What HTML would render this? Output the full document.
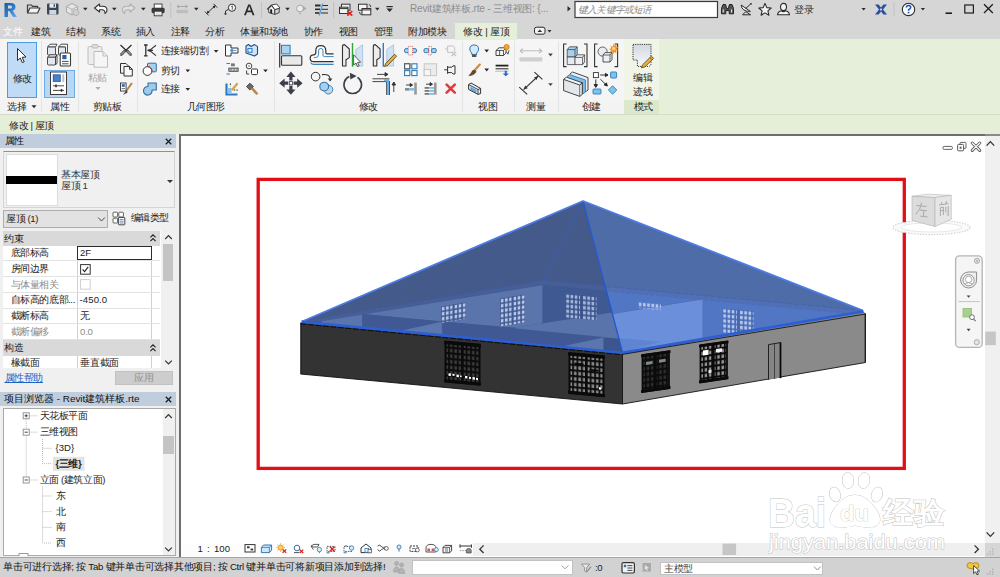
<!DOCTYPE html>
<html lang="zh">
<head>
<meta charset="utf-8">
<title>Revit</title>
<style>
html,body{margin:0;padding:0;background:#d6d6d6;}
body{width:1000px;height:577px;overflow:hidden;font-family:"Liberation Sans",sans-serif;font-size:9.6px;color:#1c1c1c;}
#app{position:relative;width:1000px;height:577px;overflow:hidden;background:#d6d6d6;}
.abs{position:absolute;}
.t{position:absolute;white-space:nowrap;font-size:9.6px;line-height:12px;color:#1c1c1c;letter-spacing:-0.4px;}
.l0{letter-spacing:0 !important;}
.g{color:#8c8c8c;}
svg{position:absolute;overflow:visible;}
/* chrome */
#title{left:0;top:0;width:1000px;height:22px;background:#d6d6d6;}
#tabs{left:0;top:22px;width:1000px;height:17px;background:#d6d6d6;}
#ribbon{left:0;top:39px;width:1000px;height:75px;background:#e6efd9;}
#panels{left:0;top:39px;width:624px;height:75px;background:#f5f5f5;}
#plabels{left:0;top:100px;width:624px;height:14px;background:#f3f3f3;}
#options{left:0;top:113.5px;width:1000px;height:20.5px;background:#e5efd7;border-top:1px solid #d3dcc6;box-sizing:border-box;}
.sep{position:absolute;top:41px;width:1px;height:71px;background:#e4e4e4;}
.dd{position:absolute;width:0;height:0;border-left:2.5px solid transparent;border-right:2.5px solid transparent;border-top:3px solid #333;}
/* left palettes */
#left{left:0;top:134px;width:179px;height:423px;background:#f0f0f0;}
.phead{position:absolute;left:0;width:176px;height:14px;background:#bfcddc;}
/* viewport */
#view{left:179px;top:134px;width:806px;height:423px;background:#fff;border-left:2px solid #6e6e6e;border-top:2px solid #6e6e6e;box-sizing:border-box;}
#vscroll{left:985px;top:134px;width:15px;height:409px;background:#f0f0f0;border-top:2px solid #8a8a8a;box-sizing:border-box;}
#hscroll{left:473px;top:543px;width:512px;height:13px;background:#efefef;}
#vcb{left:181px;top:543px;width:292px;height:13px;background:#fdfdfd;}
#status{left:0;top:557px;width:1000px;height:20px;background:#d2d2d2;border-top:1px solid #a6a6a6;box-sizing:border-box;}
</style>
</head>
<body>
<div id="app">
<!-- ===== chrome blocks ===== -->
<div id="title" class="abs"></div>
<div id="tabs" class="abs"></div>
<div id="ribbon" class="abs"></div>
<div id="panels" class="abs"></div>
<div id="plabels" class="abs"></div>
<div id="options" class="abs"></div>
<div id="left" class="abs"></div>
<div id="view" class="abs"></div>
<div id="vscroll" class="abs"></div>
<div id="vcb" class="abs"></div>
<div id="hscroll" class="abs"></div>
<div id="status" class="abs"></div>
<!--TITLEBAR-->
<svg class="abs" style="left:0;top:0" width="1000" height="22" viewBox="0 0 1000 22">
<defs><linearGradient id="rg" x1="0" y1="0" x2="1" y2="1"><stop offset="0" stop-color="#1b5a9c"/><stop offset="0.55" stop-color="#2f7fd0"/><stop offset="1" stop-color="#6db0ee"/></linearGradient></defs>
<!-- R logo -->
<path d="M4.5,3 H11 Q15.5,3 15.5,7 Q15.5,10 12.5,10.6 L17,17 H13.2 L9.4,11 H8 V17 H4.5 Z M8,5.6 V8.6 H10.6 Q12,8.6 12,7.1 Q12,5.6 10.6,5.6 Z" fill="url(#rg)"/>
<!-- open -->
<path d="M27.5,13 V5 H31.5 L32.5,6.3 H37.5 V8" fill="none" stroke="#3c3c3c" stroke-width="1.2"/>
<path d="M27.5,13 L30,8 H40 L37.5,13 Z" fill="#f4f4f4" stroke="#3c3c3c" stroke-width="1.2" stroke-linejoin="round"/>
<!-- save -->
<rect x="47" y="3.5" width="11.5" height="11" rx="1" fill="#3b4656"/><rect x="49.5" y="3.5" width="6.5" height="4.2" fill="#e9eef5"/><rect x="49.3" y="10" width="7" height="4.5" fill="#cfd6df"/><rect x="53.6" y="4.2" width="1.4" height="2.6" fill="#3b4656"/>
<!-- sync (disabled) -->
<path d="M66.5,6.5 L72,3.5 L77.5,6.5 V12 L72,15 L66.5,12 Z" fill="#e6e6e6" stroke="#a9a9a9" stroke-width="1"/><path d="M66.5,6.5 L72,9.5 L77.5,6.5 M72,9.5 V15" fill="none" stroke="#a9a9a9" stroke-width="0.9"/><circle cx="76" cy="12.5" r="3" fill="#cfcfcf" stroke="#a9a9a9" stroke-width="0.7"/>
<path d="M83,7.8 h4.6 l-2.3,2.8 z" fill="#2b2b2b"/>
<!-- undo -->
<path d="M94.5,8 L99.5,4 V6.3 H102.5 Q107,6.3 107,10 Q107,12.5 105,13.6 Q105.2,9.8 102,9.8 H99.5 V12 Z" fill="#fbfbfb" stroke="#333" stroke-width="1.1" stroke-linejoin="round"/>
<path d="M112,7.8 h4.6 l-2.3,2.8 z" fill="#2b2b2b"/>
<!-- redo (disabled) -->
<path d="M135,8 L130,4 V6.3 H127 Q122.5,6.3 122.5,10 Q122.5,12.5 124.5,13.6 Q124.3,9.8 127.5,9.8 H130 V12 Z" fill="#e2e2e2" stroke="#b0b0b0" stroke-width="1.1" stroke-linejoin="round"/>
<path d="M141,7.8 h4.6 l-2.3,2.8 z" fill="#2b2b2b"/>
<!-- print -->
<rect x="154.2" y="4" width="7.8" height="4.4" fill="#fff" stroke="#333" stroke-width="0.9"/><rect x="151.6" y="7.8" width="13" height="5.4" rx="1.4" fill="#3a3a3a"/><rect x="154.2" y="11.2" width="7.8" height="4.6" fill="#fff" stroke="#333" stroke-width="0.9"/><path d="M155.6,13 h5 M155.6,14.4 h5" stroke="#9aa" stroke-width="0.5"/>
<line x1="170.8" y1="2" x2="170.8" y2="18" stroke="#c2c2c2" stroke-width="1"/>
<!-- measure (disabled) -->
<path d="M177,6.5 H187.5 M177,6.5 l2,-1.6 M177,6.5 l2,1.6 M187.5,6.5 l-2,-1.6 M187.5,6.5 l-2,1.6" fill="none" stroke="#a6a6a6" stroke-width="1"/><rect x="176.5" y="9.8" width="11.5" height="3.4" fill="#bdbdbd"/>
<path d="M194,7.8 h4.6 l-2.3,2.8 z" fill="#2b2b2b"/>
<!-- aligned dimension -->
<path d="M206.8,13.4 L215.4,5.6 M205,11.6 L208.6,15.4 M213.6,3.8 L217.2,7.6" fill="none" stroke="#222" stroke-width="0.9"/><path d="M206.8,13.4 l2.8,-0.6 l-2,-2.2 z M215.4,5.6 l-2.8,0.6 l2,2.2 z" fill="#222"/>
<!-- tag -->
<circle cx="232" cy="7.7" r="3.6" fill="#f8f8f8" stroke="#333" stroke-width="1"/><path d="M231.3,6.7 l1,-0.8 v3.8" fill="none" stroke="#333" stroke-width="0.8"/><path d="M228.6,9.2 L225.5,11 V13.5" fill="none" stroke="#333" stroke-width="1"/><circle cx="225.5" cy="13.8" r="1.1" fill="#333"/>
<!-- A -->
<path d="M244,15.2 L248.2,4.4 H250.3 L254.5,15.2 H252.6 L251.5,12.2 H247 L245.9,15.2 Z M247.6,10.6 H250.9 L249.25,6.1 Z" fill="#2a2a2a"/>
<line x1="261.5" y1="2" x2="261.5" y2="18" stroke="#c2c2c2" stroke-width="1"/>
<!-- 3D house -->
<path d="M268.6,8.8 L271.6,5.6 L274.8,9.6 V14.4 L268.8,12.6 Z" fill="#f0f0f4" stroke="#333" stroke-width="0.9" stroke-linejoin="round"/>
<path d="M274.8,9.6 L279.2,8.2 V12.6 L274.8,14.4 Z" fill="#d4d6dc" stroke="#333" stroke-width="0.9" stroke-linejoin="round"/>
<path d="M271.6,5 L276.6,4 L280,8 L274.8,9.6 Z" fill="#fdfdfd" stroke="#333" stroke-width="0.9" stroke-linejoin="round"/>
<path d="M267.2,9.4 L271.6,4.8" stroke="#333" stroke-width="1.2" fill="none"/>
<path d="M270.2,13 V10.4 Q270.2,9 271.2,9 Q272.2,9.2 272.2,10.6 V13.6 Z" fill="#222"/>
<path d="M285.2,7.8 h4.6 l-2.3,2.8 z" fill="#2b2b2b"/>
<!-- section (disabled) -->
<circle cx="300" cy="8.5" r="3.4" fill="#ececec" stroke="#a8a8a8" stroke-width="1"/><path d="M303,6 L306.5,8.5 L303,11 Z" fill="#a8a8a8"/><line x1="300" y1="12" x2="300" y2="14.5" stroke="#a8a8a8" stroke-width="1"/>
<!-- thin lines -->
<g stroke="#2a2a2a"><line x1="315" y1="5.5" x2="320.5" y2="5.5" stroke-width="2"/><line x1="322" y1="5.5" x2="328" y2="5.5" stroke-width="1"/><line x1="315" y1="9.3" x2="320" y2="9.3" stroke-width="1.6"/><line x1="321.5" y1="9.3" x2="328" y2="9.3" stroke-width="1"/><line x1="315" y1="13" x2="319.5" y2="13" stroke-width="1.6"/><line x1="321" y1="13" x2="328" y2="13" stroke-width="1"/></g><line x1="322.8" y1="3.5" x2="319.2" y2="15.5" stroke="#4a9be8" stroke-width="1.2"/>
<line x1="333.6" y1="2" x2="333.6" y2="18" stroke="#c2c2c2" stroke-width="1"/>
<!-- close hidden -->
<rect x="341.5" y="4.2" width="8.5" height="6" fill="#f4f4f4" stroke="#333" stroke-width="1"/><rect x="339.5" y="7.2" width="8.5" height="6.3" fill="#f4f4f4" stroke="#333" stroke-width="1"/><line x1="339.5" y1="8.6" x2="348" y2="8.6" stroke="#333" stroke-width="1"/><path d="M347.3,11 l5,4.6 M352.3,11 l-5,4.6" stroke="#e02020" stroke-width="1.6" fill="none"/>
<!-- switch windows -->
<rect x="358.5" y="4.2" width="8.5" height="6" fill="#f4f4f4" stroke="#333" stroke-width="1"/><rect x="362" y="8.5" width="8.8" height="6.3" fill="#f4f4f4" stroke="#333" stroke-width="1"/><line x1="362" y1="9.9" x2="370.8" y2="9.9" stroke="#333" stroke-width="1"/><path d="M368.8,4.5 q2,0.2 2,2.6 M359.5,12 q0,2.4 2,2.6" fill="none" stroke="#333" stroke-width="0.9"/>
<path d="M375,7.8 h4.6 l-2.3,2.8 z" fill="#2b2b2b"/>
<!-- customize -->
<line x1="386.4" y1="6.6" x2="392.8" y2="6.6" stroke="#2b2b2b" stroke-width="1.2"/><path d="M386.4,8.6 h6.4 l-3.2,3.4 z" fill="#2b2b2b"/>
<!-- search -->
<path d="M567.5,6 l3.2,2.8 l-3.2,2.8 z" fill="#2b2b2b"/>
<rect x="575" y="1.5" width="142.5" height="16" fill="#fff" stroke="#3a3a3a" stroke-width="1.2"/>
<!-- binoculars -->
<path d="M721.5,13.8 V8.5 L723,4.5 H725.6 L726.6,8.5 H728.4 L729.4,4.5 H732 L733.5,8.5 V13.8 H729.2 V10.5 H725.8 V13.8 Z" fill="#555" stroke="#222" stroke-width="1" stroke-linejoin="round"/><path d="M723.2,9.4 v3.2 M731.6,9.4 v3.2" stroke="#e8e8e8" stroke-width="1.1"/>
<!-- satellite -->
<path d="M741.2,5 Q741.6,11.6 750.4,11.4 Z" fill="#f4f4f4" stroke="#2b2b2b" stroke-width="1"/><path d="M745.4,8.8 L750.6,4 M745.8,11.6 L742.6,14.8 H750.6 Z" fill="none" stroke="#2b2b2b" stroke-width="1"/><circle cx="751" cy="3.8" r="0.9" fill="#2b2b2b"/>
<!-- star -->
<path d="M765,3.4 L766.8,7.6 L771.2,8 L767.9,10.9 L768.9,15.2 L765,12.9 L761.1,15.2 L762.1,10.9 L758.8,8 L763.2,7.6 Z" fill="#f4f4f4" stroke="#2b2b2b" stroke-width="1.1" stroke-linejoin="round"/>
<!-- user -->
<ellipse cx="783.5" cy="7" rx="3" ry="3.6" fill="#f4f4f4" stroke="#2b2b2b" stroke-width="1.1"/><path d="M777.5,14.8 Q778,11.4 781.6,10.8 Q783.5,12.4 785.4,10.8 Q789,11.4 789.5,14.8 Z" fill="#f4f4f4" stroke="#2b2b2b" stroke-width="1.1" stroke-linejoin="round"/>
<path d="M861.5,8 h4.2 l-2.1,2.6 z" fill="#2b2b2b"/>
<!-- exchange X -->
<path d="M875,4.6 H878.6 L881,7.6 L883.4,4.6 H887 L883,9.4 L887,14.4 H883.4 L881,11.4 L878.6,14.4 H875 L879,9.4 Z" fill="#2a4f9e"/><path d="M879.8,9.4 L881,8 L882.2,9.4 L881,10.9 Z" fill="#d8d8d8"/>
<line x1="894" y1="2" x2="894" y2="16" stroke="#c2c2c2" stroke-width="1"/>
<!-- help -->
<circle cx="908.5" cy="9.4" r="6.2" fill="#fafafa" stroke="#2b2b2b" stroke-width="1.1"/><path d="M906.4,7.6 Q906.4,5.6 908.6,5.6 Q910.7,5.6 910.7,7.4 Q910.7,8.6 908.6,9.6 V10.8" fill="none" stroke="#1f4fb0" stroke-width="1.5"/><rect x="907.8" y="11.8" width="1.6" height="1.6" fill="#1f4fb0"/>
<path d="M920.8,8 h4.2 l-2.1,2.6 z" fill="#2b2b2b"/>
<!-- window buttons -->
<line x1="945.5" y1="13.2" x2="952" y2="13.2" stroke="#1e1e1e" stroke-width="1.6"/>
<rect x="964.8" y="5" width="8.6" height="8" fill="none" stroke="#1e1e1e" stroke-width="1.2"/>
<path d="M984,4.2 L992.8,13 M992.8,4.2 L984,13" stroke="#1e1e1e" stroke-width="1.3" fill="none"/>
</svg>
<div class="t" style="left:410px;top:3px;color:#8d8d8d;font-size:10px;letter-spacing:-0.2px">Revit建筑样板.rte - 三维视图: {...</div>
<div class="t" style="left:578px;top:3.5px;color:#8a8a8a;font-style:italic;font-size:9.6px;letter-spacing:-0.8px">键入关键字或短语</div>
<div class="t" style="left:794px;top:3.5px;font-size:10px;color:#2a2a2a">登录</div>

<!--TABS-->
<div class="abs" style="left:455px;top:23px;width:62px;height:17px;background:#e6efd9;"></div>
<div class="t" style="left:3px;top:25.5px;color:#fff">文件</div>
<div class="t" style="left:31px;top:25.5px">建筑</div>
<div class="t" style="left:66px;top:25.5px">结构</div>
<div class="t" style="left:101px;top:25.5px">系统</div>
<div class="t" style="left:135.5px;top:25.5px">插入</div>
<div class="t" style="left:170.5px;top:25.5px">注释</div>
<div class="t" style="left:205px;top:25.5px">分析</div>
<div class="t" style="left:240px;top:25.5px">体量和场地</div>
<div class="t" style="left:303.5px;top:25.5px">协作</div>
<div class="t" style="left:338.5px;top:25.5px">视图</div>
<div class="t" style="left:373.5px;top:25.5px">管理</div>
<div class="t" style="left:408px;top:25.5px">附加模块</div>
<div class="t l0" style="left:462.5px;top:25.5px">修改 | 屋顶</div>
<svg class="abs" style="left:530px;top:24px" width="26" height="14" viewBox="0 0 26 14"><rect x="4.5" y="3.2" width="10.5" height="7" rx="2" fill="#f2f2f2" stroke="#2b2b2b" stroke-width="1"/><path d="M7.5,8 h4.6 l-2.3,-2.6 z" fill="#2b2b2b"/><path d="M17.5,6 h4 l-2,2.4 z" fill="#2b2b2b"/></svg>

<!--RIBBON-->
<div class="sep" style="left:41px"></div><div class="sep" style="left:77.5px"></div><div class="sep" style="left:137px"></div><div class="sep" style="left:273.5px"></div><div class="sep" style="left:462px"></div><div class="sep" style="left:513.5px"></div><div class="sep" style="left:557.5px"></div>
<div class="abs" style="left:624px;top:39px;width:35px;height:75px;background:#f0f5e8;"></div>
<div class="abs" style="left:624px;top:100px;width:35px;height:14px;background:#dbe8c9;"></div>
<div class="abs" style="left:7px;top:41.5px;width:30px;height:56px;background:#bfdbf5;border:1px solid #4b9be2;box-sizing:border-box;"></div>
<div class="abs" style="left:44px;top:70px;width:31px;height:27.5px;background:#b9d7f3;border:1px solid #6aadE6;box-sizing:border-box;"></div>
<svg id="rib" class="abs" style="left:0;top:0" width="1000" height="134" viewBox="0 0 1000 134">
<!-- modify cursor -->
<path d="M17.5,48.5 V60.5 L20.3,58 L22.3,62.6 L24.2,61.8 L22.2,57.3 L26,57 Z" fill="#fff" stroke="#2b2b2b" stroke-width="1" stroke-linejoin="round"/>
<path d="M31.5,105.2 h5 l-2.5,3 z" fill="#2b2b2b"/>
<!-- type properties -->
<g stroke="#3a3a3a" stroke-width="0.9" stroke-linejoin="round">
<path d="M47.5,47 L50,44.2 H57 L55.5,47 Z M58.5,47 L61,44.2 H67.5 V52 L65.5,54.5 V47 Z" fill="#fafafa"/>
<rect x="47.5" y="47" width="8" height="8" rx="1" fill="#e4e8ee"/><rect x="58.5" y="47" width="7" height="8" rx="1" fill="#e4e8ee"/>
<rect x="47.5" y="57" width="8" height="8" rx="1" fill="#e4e8ee"/><path d="M47.5,57 L50,54.8 H57 L55.5,57 Z M55.5,57 L57,54.8 V63 L55.5,65 Z" fill="#fafafa"/>
<rect x="60.2" y="53" width="10.3" height="13" rx="1" fill="#fff" stroke-width="1.1"/>
</g>
<rect x="62.3" y="55" width="4.2" height="4.2" fill="#2b5fa8"/><path d="M62,61.4 h6.6 M62,63.8 h6.6" stroke="#333" stroke-width="0.9"/>
<!-- properties -->
<rect x="50.5" y="72" width="16" height="22.5" fill="#fff" stroke="#3a3a3a" stroke-width="1"/><rect x="52.8" y="74.3" width="8" height="7.6" fill="#2d62ae"/><rect x="53.8" y="75.3" width="6" height="5.6" fill="#4c7fc6"/><rect x="62.3" y="74.3" width="2" height="7.6" fill="#b9c0c8"/>
<path d="M53,85.8 h11 M53,90.4 h11" stroke="#333" stroke-width="0.9"/><path d="M56,84.4 v2.8 M61.5,89 v2.8" stroke="#333" stroke-width="1.6"/>
<!-- paste (disabled) -->
<g stroke="#bdbdbd" stroke-width="1" fill="#ededed" stroke-linejoin="round"><rect x="88" y="46.5" width="14" height="18" rx="1.5"/><rect x="92" y="44.6" width="6" height="3.4" rx="1" fill="#dcdcdc"/><path d="M94,51.5 H103 L107.5,56 V67.2 H94 Z" fill="#f6f6f6"/><path d="M103,51.5 V56 H107.5" fill="none"/></g>
<path d="M95.5,87 h5 l-2.5,3 z" fill="#a8a8a8"/>
<!-- cut -->
<path d="M120.5,45 L131.5,55.5 M131.5,45 L120.5,55.5" stroke="#2b2b2b" stroke-width="1.2" fill="none"/><path d="M124,50 l-3.6,4 l1.6,1.6 l3.6,-3.8 z M128,50 l3.6,4 l-1.6,1.6 l-3.6,-3.8 z" fill="#8c8c8c" stroke="#2b2b2b" stroke-width="0.6"/>
<!-- copy -->
<g stroke="#333" stroke-width="1" stroke-linejoin="round"><path d="M120.5,63.5 H126 L128.5,66 V73.2 H120.5 Z" fill="#f2f2f2"/><path d="M124,66.5 H129.5 L132.3,69.3 V76 H124 Z" fill="#fafafa"/><path d="M129.5,66.5 V69.3 H132.3" fill="none"/></g>
<!-- match type -->
<rect x="120.5" y="83" width="5.6" height="8" fill="#fff" stroke="#333" stroke-width="0.9"/><rect x="121.8" y="84.2" width="3" height="2.6" fill="#2d62ae"/><path d="M121.6,88.6 h3.4" stroke="#333" stroke-width="0.7"/><path d="M132,83 L126.5,90.5" stroke="#b5853c" stroke-width="2"/><path d="M126.8,89.6 L123,95 L127.6,92.6 Z" fill="#444"/>
<!-- geometry: cope -->
<path d="M144,45 h3.6 M144,55.8 h3.6 M145.8,45 v10.8" stroke="#333" stroke-width="1.3" fill="none"/><path d="M156,45.2 L149.5,50.4 L156,55.6 M147.5,50.4 H153" stroke="#333" stroke-width="1.1" fill="none"/><path d="M147.2,50.4 l2.6,-1.7 v3.4 z" fill="#333"/>
<path d="M213.8,50 h4.6 l-2.3,2.8 z" fill="#2b2b2b"/>
<!-- cut geometry -->
<rect x="147.5" y="63.2" width="8.8" height="8.6" rx="0.8" fill="#a9d0ec" stroke="#2f6ea8" stroke-width="1"/><circle cx="147.5" cy="71" r="4.4" fill="#fff" stroke="#333" stroke-width="1"/><path d="M147.5,66.6 A4.4,4.4 0 0 1 151.9,71" fill="none" stroke="#d03030" stroke-width="1"/>
<path d="M185.5,69.4 h4.6 l-2.3,2.8 z" fill="#2b2b2b"/>
<!-- join geometry -->
<path d="M148,83 H156.3 V90 H152 A4.3,4.3 0 1 1 148,86.5 Z" fill="#9fcbea" stroke="#2f6ea8" stroke-width="1.1" stroke-linejoin="round"/>
<path d="M185.5,88 h4.6 l-2.3,2.8 z" fill="#2b2b2b"/>
<!-- col1 icons -->
<path d="M225.5,45 H231 V48 H238 V53 H231 V56 H225.5 Z" fill="#fafafa" stroke="#333" stroke-width="1" stroke-linejoin="round"/><path d="M236.5,50.5 H230 M230,50.5 l2.6,-2 v4 z" fill="#5b93c8" stroke="#5b93c8" stroke-width="0.9"/>
<path d="M226.5,63.5 h3.4 M226.5,74 h3.4" stroke="#2f7bc0" stroke-width="1.2"/><rect x="231" y="63.4" width="3.8" height="2.8" fill="#777"/><rect x="228.8" y="68" width="9.4" height="3.4" fill="#9a9a9a" stroke="#444" stroke-width="0.7"/><path d="M232,69.7 h1.2 M235,69.7 h1.2" stroke="#fff" stroke-width="0.8"/>
<path d="M226.5,83.5 V94.5 H237.5" stroke="#2f7bc0" stroke-width="2.2" fill="none"/><rect x="227.6" y="88" width="4" height="5.4" fill="#8cc0ea"/><path d="M230.4,83.5 v3 M233.6,90 h4.2" stroke="#333" stroke-width="1" stroke-dasharray="1.6 1.2"/><path d="M232,90 L237.6,83.2" stroke="#d8a23c" stroke-width="2.2"/>
<!-- col2 icons -->
<path d="M246,46 L248.5,44.5 L251,46.5 L254.5,44.6 L257.5,46.4 V54 L254.5,56 L246,53 Z" fill="#cfe3f4" stroke="#1f4f86" stroke-width="1.1" stroke-linejoin="round"/><rect x="248" y="48.6" width="4" height="3.6" fill="#fff" stroke="#1f6fc0" stroke-width="1"/>
<circle cx="249" cy="66" r="2.8" fill="#fff" stroke="#333" stroke-width="0.9"/><circle cx="249" cy="66" r="0.7" fill="#333"/><rect x="251.5" y="69" width="6" height="5.6" rx="1" fill="#fff" stroke="#333" stroke-width="1"/><path d="M246.6,70.5 v3.5 h2.6" stroke="#333" stroke-width="0.9" fill="none"/>
<path d="M263.2,69.4 h4.6 l-2.3,2.8 z" fill="#2b2b2b"/>
<path d="M246.5,86.5 L250,83.2 L253.4,86.6 L249.8,90 Z" fill="#6a6a6a" stroke="#333" stroke-width="0.8"/><path d="M251.6,88.2 L257.2,94.4" stroke="#b98a4e" stroke-width="2.1"/><path d="M251.6,88.2 L257.2,94.4" stroke="#6d4a1e" stroke-width="0.5" transform="translate(0.9,-0.6)"/>
</svg>
<div class="t" style="left:12.5px;top:72.5px;font-size:9.8px">修改</div>
<div class="t" style="left:7px;top:100.5px">选择</div>
<div class="t" style="left:50px;top:100.5px">属性</div>
<div class="t" style="left:87.5px;top:72px;color:#a6a6a6;font-size:9.8px">粘贴</div>
<div class="t" style="left:92.5px;top:100.5px">剪贴板</div>
<div class="t" style="left:160.5px;top:45.3px">连接端切割</div>
<div class="t" style="left:160.5px;top:64.5px">剪切</div>
<div class="t" style="left:160.5px;top:83.2px">连接</div>
<div class="t" style="left:186.5px;top:100.5px">几何图形</div>

<svg id="rib2" class="abs" style="left:0;top:0" width="1000" height="134" viewBox="0 0 1000 134">
<!-- align -->
<line x1="279.7" y1="43" x2="279.7" y2="67.4" stroke="#333" stroke-width="1.2"/><rect x="281.5" y="45.3" width="8.6" height="8.6" fill="#a9d3ee" stroke="#2f7bb8" stroke-width="1"/><rect x="281.5" y="55.8" width="20.3" height="9.4" rx="1" fill="#e9e9e9" stroke="#333" stroke-width="1.1"/>
<!-- offset -->
<path d="M333.6,53.8 H327 Q325.8,53.8 325.8,52.4 V50.6 Q325.8,45.6 320.8,45.6 Q315.8,45.6 315.8,50.6 V52.6 Q315.8,54.8 313.6,54.8 Q310.2,54.8 310.2,58.2 Q310.2,61.6 313.6,61.6 H333.6" fill="#fbfbfb" stroke="#333" stroke-width="1.2" stroke-linejoin="round"/>
<path d="M333.6,56.6 H324.4 Q323,56.6 323,55.2 V50.8 Q323,48.4 320.8,48.4 Q318.6,48.4 318.6,50.8 V54.2 Q318.6,57.6 315.2,57.6 H313.8" fill="none" stroke="#3b86c2" stroke-width="1"/>
<path d="M310.6,62.4 Q311.6,64.4 314,64.4 H333.6" fill="none" stroke="#3b86c2" stroke-width="1.1"/>
<!-- mirror pick axis -->
<path d="M342.5,66 V46.5 Q342.5,44.6 344.5,44.6 L349.3,49 V57.6 L346,59.8 V66 Z" fill="#ececec" stroke="#333" stroke-width="1.1" stroke-linejoin="round"/>
<path d="M362.6,66 V44.8 L355.8,49.5 V66 Z" fill="#cfe3f3" stroke="#9dbfdb" stroke-width="0.8"/>
<line x1="352.5" y1="43" x2="352.5" y2="66.8" stroke="#2ea43a" stroke-width="1.4"/>
<path d="M353.6,54.8 V65 L356,63 L357.6,66.6 L359.2,65.9 L357.6,62.4 L360.6,62.2 Z" fill="#fff" stroke="#333" stroke-width="0.8" stroke-linejoin="round"/>
<!-- mirror draw axis -->
<path d="M373.3,66 V46.5 Q373.3,44.6 375.3,44.6 L380.1,49 V57.6 L376.8,59.8 V66 Z" fill="#ececec" stroke="#333" stroke-width="1.1" stroke-linejoin="round"/>
<path d="M393.6,66 V44.8 L386.8,49.5 V66 Z" fill="#cfe3f3" stroke="#9dbfdb" stroke-width="0.8"/>
<line x1="383.3" y1="43" x2="383.3" y2="66.8" stroke="#2f7bc8" stroke-width="1.4"/>
<path d="M394.6,54.2 L396.6,56.2 L387.5,65.5 L384.5,66.6 L385.6,63.5 Z" fill="#e7b23c" stroke="#4a3a18" stroke-width="0.8" stroke-linejoin="round"/>
<!-- move -->
<g fill="#3a3f48"><path d="M290.9,71.6 l4.6,5.4 h-3 v3.6 h-3.2 v-3.6 h-3 z"/><path d="M290.9,94.8 l4.6,-5.4 h-3 v-3.6 h-3.2 v3.6 h-3 z"/><path d="M279.2,83.2 l5.4,-4.6 v3 h3.6 v3.2 h-3.6 v3 z"/><path d="M302.6,83.2 l-5.4,-4.6 v3 h-3.6 v3.2 h3.6 v3 z"/></g><rect x="289.3" y="81.6" width="3.2" height="3.2" fill="#fff" stroke="#3a3f48" stroke-width="0.8"/>
<!-- copy -->
<circle cx="315.6" cy="76.6" r="4.3" fill="#f6f6f6" stroke="#333" stroke-width="1"/><path d="M322,74.6 Q330,73.6 330,79" fill="none" stroke="#333" stroke-width="1.1"/><path d="M327.8,78.4 h4.6 l-2.3,3 z" fill="#333"/>
<circle cx="328.4" cy="89.6" r="4.4" fill="#bcdaf0" stroke="#3b86c2" stroke-width="1"/><circle cx="324.2" cy="86.6" r="4.4" fill="#a8cfec" stroke="#2f76b0" stroke-width="1.1"/>
<!-- rotate -->
<path d="M349.3,76.6 A8.8,8.8 0 1 0 357.5,77.3" fill="none" stroke="#3a3f48" stroke-width="1.6"/><path d="M349.8,72.8 L356.6,76 L350.4,79.6 Z" fill="#3a3f48"/>
<!-- trim/extend corner -->
<path d="M372.5,78.8 H389.5 M372.5,81.6 H386.6 V95" fill="none" stroke="#333" stroke-width="0.9"/><path d="M389.5,95 V81" fill="none" stroke="#333" stroke-width="0.9"/>
<path d="M384,80.2 H388 V95" fill="none" stroke="#6fb0e4" stroke-width="2.2"/>
<path d="M377,74.4 H388 M388,74.4 l-3,-1.8 v3.6 z" stroke="#333" stroke-width="0.9" fill="#333"/><path d="M393.8,92 V82 M393.8,82 l-1.8,3 h3.6 z" stroke="#333" stroke-width="0.9" fill="#333"/>
<!-- split -->
<rect x="404.5" y="48.6" width="12" height="4" rx="1.6" fill="#a8d2ee" stroke="#2f7bb8" stroke-width="1"/><rect x="408.2" y="46.4" width="4.4" height="8.6" fill="#f5f5f5" stroke="#d05050" stroke-width="0.7" stroke-dasharray="1.2 0.8"/>
<rect x="424" y="48.6" width="4.6" height="4" rx="1.2" fill="#a8d2ee" stroke="#2f7bb8" stroke-width="1"/><rect x="431.6" y="48.6" width="4.6" height="4" rx="1.2" fill="#a8d2ee" stroke="#2f7bb8" stroke-width="1"/><rect x="428.8" y="46.4" width="2.8" height="8.6" fill="none" stroke="#d05050" stroke-width="0.7" stroke-dasharray="1.2 0.8"/>
<!-- unpin (disabled) -->
<path d="M445,49 h2.6 M447.6,46 v6.4 h5.6 l1.4,-1.6 v-3.2 l-1.4,-1.6 h-5.6" fill="none" stroke="#c0c0c0" stroke-width="0.9"/><path d="M451.5,52 l4.6,4 M456.1,52 l-4.6,4" stroke="#c6c6c6" stroke-width="1.2"/>
<!-- array -->
<g fill="#fff" stroke="#2f7bb8" stroke-width="1.1"><rect x="404.6" y="63.8" width="5.2" height="5"/><rect x="411.8" y="63.8" width="5.2" height="5"/><rect x="404.6" y="70.6" width="5.2" height="5"/><rect x="411.8" y="70.6" width="5.2" height="5"/></g><rect x="404.6" y="63.8" width="5.2" height="5" fill="#fff" stroke="#555" stroke-width="1.1"/>
<!-- scale (disabled) -->
<rect x="424.2" y="63.8" width="12.4" height="11.8" fill="#ececec" stroke="#c6c6c6" stroke-width="1"/><rect x="424.2" y="69.4" width="6.4" height="6.2" fill="#f6f6f6" stroke="#c6c6c6" stroke-width="1"/>
<!-- pin -->
<path d="M444.2,69.8 h3.4 M447.6,66 v7.8 M447.6,67.2 h4.2 l1.2,-1.4 h2 v8.2 h-2 l-1.2,-1.4 h-4.2" fill="#f4f4f4" stroke="#333" stroke-width="1" stroke-linejoin="round"/>
<!-- trim/extend single -->
<rect x="414.2" y="82.6" width="2.6" height="12" fill="#9a9a9a"/><rect x="405" y="88" width="4.5" height="2.6" fill="#8a8a8a"/><rect x="409.5" y="88" width="4.7" height="2.6" fill="#7cc0ee"/><path d="M406,85 H412.5 M412.5,85 l-2.4,-1.6 v3.2 z" stroke="#333" stroke-width="0.9" fill="#333"/>
<!-- trim/extend multiple -->
<rect x="434" y="82.6" width="2.6" height="12" fill="#9a9a9a"/><g fill="#7a7a7a"><rect x="424.6" y="87" width="4.6" height="1.8"/><rect x="424.6" y="90" width="4.6" height="1.8"/><rect x="424.6" y="93" width="4.6" height="1.8"/></g><g fill="#7cc0ee"><rect x="429.2" y="87" width="4.8" height="1.8"/><rect x="429.2" y="90" width="4.8" height="1.8"/><rect x="429.2" y="93" width="4.8" height="1.8"/></g><path d="M426,84.2 H432.4 M432.4,84.2 l-2.4,-1.6 v3.2 z" stroke="#333" stroke-width="0.9" fill="#333"/>
<!-- delete -->
<path d="M446.6,84.6 L454.8,92.6 M454.8,84.6 L446.6,92.6" stroke="#e03a3a" stroke-width="2.6" stroke-linecap="round"/>
<!-- VIEW panel: bulb -->
<path d="M474.2,45 Q478.6,45 478.6,49.2 Q478.6,51.4 476.6,53 V54.6 H471.8 V53 Q469.8,51.4 469.8,49.2 Q469.8,45 474.2,45 Z" fill="#d6e9f8" stroke="#2f6fb0" stroke-width="1"/><rect x="472" y="54.6" width="4.4" height="2.4" fill="#555"/>
<path d="M484.4,49.6 h4.6 l-2.3,2.8 z" fill="#2b2b2b"/>
<!-- render box with sun -->
<path d="M496,50.5 L499,47.8 H506 V53 L503.5,55.5 H496 Z" fill="#f4f4f4" stroke="#333" stroke-width="0.9" stroke-linejoin="round"/><path d="M496,50.5 H503.5 L506,47.8 M503.5,50.5 V55.5 M499.6,50.5 V55.5" fill="none" stroke="#333" stroke-width="0.8"/><circle cx="506.6" cy="47" r="2.6" fill="#f6a623" stroke="#d9781a" stroke-width="0.8"/><path d="M506.4,51.6 l1.6,2.6 l1,-4" fill="none" stroke="#333" stroke-width="0.8"/>
<!-- brush -->
<path d="M479.8,64.6 L473.6,71.6" stroke="#c98d45" stroke-width="2.3" stroke-linecap="round"/><path d="M474.6,70 L476.2,71.8 Q473.6,75.8 468.8,75.6 Q471.6,73.6 472.4,70.8 Z" fill="#6a4526" stroke="#4a2e16" stroke-width="0.5"/>
<path d="M484.4,68.6 h4.6 l-2.3,2.8 z" fill="#2b2b2b"/>
<!-- line weights -->
<path d="M495.6,65.6 H508.4" stroke="#222" stroke-width="1.8"/><path d="M495.6,68.8 H508.4" stroke="#222" stroke-width="1"/><path d="M495.6,71.2 H508.4" stroke="#444" stroke-width="0.7" stroke-dasharray="1 1"/><path d="M504.8,70.8 V73.4 H502.6 L505.8,76.2 L509,73.4 H506.8 V70.8 Z" fill="#1f6fd0"/>
<!-- selection box -->
<path d="M468.6,84.6 L471,83 L480.6,88.4 V93.6 L478,94.4 L468.6,89.4 Z" fill="#e6eef6" stroke="#333" stroke-width="1" stroke-linejoin="round"/><path d="M468.6,84.6 L478,89.6 V94.4 M478,89.6 L480.6,88.4" fill="none" stroke="#333" stroke-width="0.9"/><path d="M470.8,87.4 L476,90.2 V92.6 L470.8,89.8 Z" fill="#6fb0e4" stroke="#2f7bb8" stroke-width="0.6"/>
</svg>
<div class="t" style="left:358.5px;top:100.5px">修改</div>
<div class="t" style="left:478px;top:100.5px">视图</div>

<svg id="rib3" class="abs" style="left:0;top:0" width="1000" height="134" viewBox="0 0 1000 134">
<defs><linearGradient id="eg" x1="0" y1="0" x2="0" y2="1"><stop offset="0" stop-color="#d2d9e2"/><stop offset="1" stop-color="#f7f8fa"/></linearGradient></defs>
<!-- measure 1 (disabled) -->
<path d="M520,50.8 H542 M520,50.8 l3,-2.2 M520,50.8 l3,2.2 M542,50.8 l-3,-2.2 M542,50.8 l-3,2.2" fill="none" stroke="#bdbdbd" stroke-width="1.1"/><rect x="519.4" y="57.2" width="23" height="4.4" rx="1" fill="#cfcfcf"/>
<path d="M548.2,53.6 h4.6 l-2.3,2.8 z" fill="#444"/>
<!-- measure 2 -->
<path d="M523.6,89.6 L538.2,76" stroke="#333" stroke-width="1.1"/><path d="M519.2,87.2 L527.2,94.4 M534.4,72.2 L542.4,79.4" stroke="#333" stroke-width="1.1"/><path d="M523.6,89.6 l4.2,-1.4 l-2.6,-2.6 z M538.2,76 l-4.2,1.4 l2.6,2.6 z" fill="#333"/>
<path d="M548.2,83.2 h4.6 l-2.3,2.8 z" fill="#444"/>
<!-- create 1 -->
<path d="M566.6,44 H563.6 V66.6 H566.6 M584,44 H587 V66.6 H584" fill="none" stroke="#333" stroke-width="1.1"/>
<g stroke="#444" stroke-width="0.8" stroke-linejoin="round"><path d="M567.2,49.6 L569.6,46.8 H577.2 V54.4 L575,57 H567.2 Z" fill="#a6d0ec"/><path d="M567.2,49.6 H575 V57 M575,49.6 L577.2,46.8" fill="none"/><rect x="567.2" y="57" width="8" height="7.6" fill="#e6e9ee"/><path d="M575,57.4 L577,54.8 H584.6 V62 L582.6,64.6 H575 Z" fill="#eef0f4"/><path d="M575,57.4 H582.6 V64.6 M582.6,57.4 L584.6,54.8" fill="none"/></g>
<!-- create 2 -->
<path d="M597.6,44 H594.6 V66.6 H597.6 M614.6,44 H617.6 V66.6 H614.6" fill="none" stroke="#333" stroke-width="1.1"/>
<circle cx="602.6" cy="51.6" r="4.6" fill="#e9ecf0" stroke="#555" stroke-width="0.9"/><path d="M603,55 L605,52.6 H612 V59.6 L610,62 H603 Z" fill="#eef0f4" stroke="#444" stroke-width="0.9" stroke-linejoin="round"/><path d="M603,55 H610 V62 M610,55 L612,52.6" fill="none" stroke="#444" stroke-width="0.8"/>
<path d="M613.6,43.4 l1,2.2 l2.2,-1.2 l-0.6,2.4 l2.4,0.4 l-1.8,1.6 l1.6,1.8 l-2.4,0.2 l0.4,2.4 l-2.2,-1.2 l-1.2,2.2 l-0.8,-2.4 l-2.4,0.6 l1.2,-2.2 l-2.2,-1.2 l2.4,-0.8 l-0.6,-2.4 l2.2,1 z" fill="#f7941d"/><circle cx="613.8" cy="48.6" r="1.7" fill="#ffd77a"/>
<!-- create 3 (parts) -->
<g stroke="#333" stroke-width="0.9" stroke-linejoin="round"><path d="M570,74 L572.6,72 L588,77.6 V90 L585.4,92" fill="#e9ecf0"/><path d="M567,76.6 L569.6,74.6 L585.4,80 V92 L582.8,94" fill="#7fbce8" stroke="#2f7bb8"/><path d="M563.6,79.4 L566.4,77.2 L582.4,82.8 L579.8,85" fill="#f4f5f7"/><path d="M563.6,79.4 L579.8,85 V96.4 L563.6,90.6 Z" fill="#e3e6ea"/><path d="M579.8,85 L582.4,82.8 V94.2 L579.8,96.4" fill="#d3d7dd"/></g>
<!-- create 4 (groups) -->
<rect x="593.4" y="72.6" width="5" height="5" fill="#fff" stroke="#333" stroke-width="0.9"/><path d="M600.2,75 H608 M608,75 l-2.6,-1.6 v3.2 z" stroke="#222" stroke-width="0.9" fill="#222"/><rect x="610.6" y="72" width="6" height="6" rx="0.8" fill="#7cc4ee" stroke="#2f7bb8" stroke-width="0.9"/>
<path d="M595.8,79.4 V86.4 M595.8,87.4 l-1.7,-2.8 h3.4 z" stroke="#222" stroke-width="0.9" fill="#222"/><path d="M600.4,79.2 L606.4,85 M607.4,86 l-3.2,-1 l2.2,-2.2 z" stroke="#222" stroke-width="0.9" fill="#222"/>
<rect x="593" y="89" width="8" height="5" rx="0.8" fill="#7cc4ee" stroke="#2f7bb8" stroke-width="0.9"/><path d="M612.6,85.8 L616.8,90 L612.6,94.2 L608.4,90 Z" fill="#7cc4ee" stroke="#2f7bb8" stroke-width="0.9"/>
<!-- edit boundary -->
<path d="M633,44.4 H651 V63.6 Q651,66.4 648,66.4 H637.4 V60 H633 Z" fill="url(#eg)" stroke="#333" stroke-width="1" stroke-dasharray="1.2 1"/>
<path d="M651.4,56.2 L653.6,58.4 L644.6,67 L641.4,67.8 L642.6,64.8 Z" fill="#e9b53d" stroke="#4a3a18" stroke-width="0.8" stroke-linejoin="round"/><path d="M650,57.6 L652.2,59.8" stroke="#b33" stroke-width="0.9"/>
</svg>
<div class="t" style="left:526px;top:101px">测量</div>
<div class="t" style="left:581.5px;top:101px">创建</div>
<div class="t" style="left:633px;top:72px;font-size:9.8px">编辑</div>
<div class="t" style="left:633px;top:85.6px;font-size:9.8px">迹线</div>
<div class="t" style="left:633.5px;top:100.5px">模式</div>
<div class="t" style="left:9px;top:119.5px">修改 | 屋顶</div>
<!--RIBBON4-->
<!--LEFT-->
<style>
.prow{position:absolute;left:3px;width:157px;height:15.75px;background:#fff;border-bottom:1px solid #e3e3e3;box-sizing:border-box;}
.prow .n{position:absolute;left:7.5px;top:1.6px;font-size:9.6px;line-height:12px;white-space:nowrap;letter-spacing:-0.4px;}
.prow .v{position:absolute;left:77px;top:1.6px;font-size:9.6px;line-height:12px;white-space:nowrap;letter-spacing:-0.2px;}
.prow i{position:absolute;left:74px;top:0;width:1px;height:100%;background:#d0d0d0;}
.prow b{position:absolute;left:148px;top:0;width:1px;height:100%;background:#d0d0d0;}
.pgrp{position:absolute;left:3px;width:157px;height:15.75px;background:#d9d9d9;box-sizing:border-box;}
.tr{position:absolute;font-size:9.6px;line-height:12px;white-space:nowrap;color:#1c1c1c;letter-spacing:-0.4px;}
</style>
<!-- Properties palette -->
<div class="phead" style="top:134px"></div>
<div class="t" style="left:4.5px;top:135px;font-size:10px;color:#111">属性</div>
<svg class="abs" style="left:164px;top:137px" width="9" height="9" viewBox="0 0 9 9"><path d="M1.8,1.8 L7.2,7.2 M7.2,1.8 L1.8,7.2" stroke="#1a1a1a" stroke-width="1.25"/></svg>
<div class="abs" style="left:3px;top:150.6px;width:172px;height:57.4px;background:#f0f0f0;border:1px solid #d4d4d4;border-top:1px solid #909090;box-sizing:border-box;"></div>
<div class="abs" style="left:5.5px;top:154px;width:52px;height:51.5px;background:#fff;border:1px solid #dcdcdc;box-sizing:border-box;"></div>
<div class="abs" style="left:6px;top:175.6px;width:51px;height:8.4px;background:#000;"></div>
<div class="t" style="left:61px;top:168.6px;color:#333">基本屋顶</div>
<div class="t" style="left:61px;top:180.4px;color:#333">屋顶 1</div>
<div class="dd" style="left:166.5px;top:179.5px;border-left-width:3px;border-right-width:3px;border-top-width:3.4px;"></div>
<div class="abs" style="left:3px;top:210px;width:105px;height:18px;background:#e2e2e2;border:1px solid #adadad;box-sizing:border-box;"></div>
<div class="t" style="left:6px;top:213px">屋顶 (1)</div>
<svg class="abs" style="left:97px;top:215.5px" width="9" height="7" viewBox="0 0 9 7"><path d="M1.2,1.6 L4.5,5 L7.8,1.6" fill="none" stroke="#444" stroke-width="1"/></svg>
<svg class="abs" style="left:112px;top:211px" width="14" height="15" viewBox="0 0 14 15"><g fill="#fff" stroke="#555" stroke-width="0.9"><rect x="1" y="1.2" width="4.6" height="4.8" rx="0.8"/><rect x="6.8" y="1.2" width="4.6" height="4.8" rx="0.8"/><rect x="1" y="7.2" width="4.6" height="4.8" rx="0.8"/><rect x="6.4" y="6.4" width="6.4" height="7.4" rx="0.6" stroke="#333"/></g><path d="M7.6,8.4 h4 M7.6,10.2 h4 M7.6,12 h4" stroke="#3a6fb0" stroke-width="0.8"/></svg>
<div class="t" style="left:130.5px;top:212px">编辑类型</div>
<!-- grid -->
<div class="abs" style="left:3px;top:230.8px;width:157.5px;height:137.6px;background:#fff;overflow:hidden;"></div>
<div class="pgrp" style="top:230.8px"></div><div class="t" style="left:4px;top:232.6px">约束</div>
<svg class="abs" style="left:149px;top:233.4px" width="8" height="10" viewBox="0 0 8 10"><path d="M1.4,4.4 L4,1.8 L6.6,4.4 M1.4,8.2 L4,5.6 L6.6,8.2" fill="none" stroke="#222" stroke-width="1.1"/></svg>
<div class="prow" style="top:245.6px"><span class="n">底部标高</span><i></i><b></b></div>
<div class="abs" style="left:77px;top:246px;width:74.5px;height:14.4px;border:1px solid #2b2b2b;background:#fff;box-sizing:border-box;"></div><div class="t l0" style="left:80px;top:247.3px">2F</div>
<div class="prow" style="top:261.35px"><span class="n">房间边界</span><i></i><b></b></div>
<svg class="abs" style="left:80px;top:263.6px" width="11" height="11" viewBox="0 0 11 11"><rect x="0.6" y="0.6" width="9.6" height="9.6" fill="#fff" stroke="#333" stroke-width="1"/><path d="M2.6,5.4 L4.6,7.6 L8.2,2.8" fill="none" stroke="#222" stroke-width="1.1"/></svg>
<div class="prow" style="top:277.1px"><span class="n g">与体量相关</span><i></i><b></b></div>
<svg class="abs" style="left:80px;top:279.4px" width="11" height="11" viewBox="0 0 11 11"><rect x="0.6" y="0.6" width="9.6" height="9.6" fill="#fff" stroke="#cfcfcf" stroke-width="1"/></svg>
<div class="prow" style="top:292.85px"><span class="n">自标高的底部...</span><i></i><b></b><span class="v" style="left:76.5px;background:#fff;letter-spacing:0.1px">-450.0</span></div>
<div class="prow" style="top:308.6px"><span class="n">截断标高</span><i></i><b></b><span class="v">无</span></div>
<div class="prow" style="top:324.35px"><span class="n g">截断偏移</span><i></i><b></b><span class="v g">0.0</span></div>
<div class="pgrp" style="top:340.1px"></div><div class="t" style="left:4px;top:341.9px">构造</div>
<svg class="abs" style="left:149px;top:342.8px" width="8" height="10" viewBox="0 0 8 10"><path d="M1.4,4.4 L4,1.8 L6.6,4.4 M1.4,8.2 L4,5.6 L6.6,8.2" fill="none" stroke="#222" stroke-width="1.1"/></svg>
<div class="prow" style="top:355.85px;height:12.6px;border-bottom:none;overflow:hidden"><span class="n">椽截面</span><i></i><b></b><span class="v">垂直截面</span></div>
<!-- grid scrollbar -->
<div class="abs" style="left:161.5px;top:230.8px;width:13px;height:137.6px;background:#f0f0f0;"></div>
<div class="abs" style="left:163px;top:244px;width:10.4px;height:37px;background:#c4c4c4;"></div>
<svg class="abs" style="left:163.5px;top:233.5px" width="9" height="7" viewBox="0 0 9 7"><path d="M1.2,5 L4.5,1.6 L7.8,5" fill="none" stroke="#333" stroke-width="1.2"/></svg>
<svg class="abs" style="left:163.5px;top:359px" width="9" height="7" viewBox="0 0 9 7"><path d="M1.2,1.6 L4.5,5 L7.8,1.6" fill="none" stroke="#333" stroke-width="1.2"/></svg>
<div class="t" style="left:4.5px;top:371.6px;color:#1c62c4;text-decoration:underline">属性帮助</div>
<div class="abs" style="left:115px;top:370.6px;width:57.5px;height:14.6px;background:#cdcdcd;border:1px solid #c2c2c2;box-sizing:border-box;"></div>
<div class="t" style="left:134px;top:371.8px;color:#8f8f8f">应用</div>
<!-- Project browser -->
<div class="phead" style="top:392px"></div>
<div class="t l0" style="left:4px;top:393px;font-size:9.9px;color:#111">项目浏览器 - Revit建筑样板.rte</div>
<svg class="abs" style="left:163.5px;top:395px" width="9" height="9" viewBox="0 0 9 9"><path d="M1.8,1.8 L7.2,7.2 M7.2,1.8 L1.8,7.2" stroke="#1a1a1a" stroke-width="1.25"/></svg>
<div class="abs" style="left:2.5px;top:408px;width:173px;height:148.4px;background:#fff;border:1px solid #a9a9a9;box-sizing:border-box;overflow:hidden;"></div>
<div class="abs" style="left:162.6px;top:409px;width:12px;height:146.4px;background:#f0f0f0;"></div>
<div class="abs" style="left:163.4px;top:436.4px;width:10.6px;height:18px;background:#c4c4c4;"></div>
<svg class="abs" style="left:164px;top:412.5px" width="9" height="7" viewBox="0 0 9 7"><path d="M1.2,5 L4.5,1.6 L7.8,5" fill="none" stroke="#333" stroke-width="1.2"/></svg>
<svg class="abs" style="left:164px;top:546.4px" width="9" height="7" viewBox="0 0 9 7"><path d="M1.2,1.6 L4.5,5 L7.8,1.6" fill="none" stroke="#333" stroke-width="1.2"/></svg>
<svg class="abs" style="left:0;top:408px;overflow:hidden" width="176" height="147.6" viewBox="0 408 176 147.6">
<g fill="none" stroke="#a8a8a8" stroke-width="0.8" stroke-dasharray="1 1"><path d="M29.5,415.8 H38 M29.5,432.2 H38 M29.5,480 H38"/><path d="M42.5,439 V463.6 H52 M42.5,448.3 H52"/><path d="M42.5,486.5 V543 H52 M42.5,496 H52 M42.5,511.6 H52 M42.5,527.4 H52"/><path d="M26.2,419 V429 M26.2,435.4 V477"/></g>
<g fill="#fff" stroke="#8c8c8c" stroke-width="0.9"><rect x="23.2" y="412.8" width="6" height="6"/><rect x="23.2" y="429.2" width="6" height="6"/><rect x="23.2" y="477" width="6" height="6"/><rect x="19" y="553.6" width="9" height="6"/></g>
<path d="M24.6,415.8 h3.2 M26.2,414.2 v3.2 M24.6,432.2 h3.2 M24.6,480 h3.2" stroke="#333" stroke-width="0.9"/>
<rect x="53" y="456.8" width="31.5" height="14" fill="#e4e4e4"/>
</svg>
<div class="tr" style="left:39.5px;top:409.8px">天花板平面</div>
<div class="tr" style="left:39.5px;top:426.2px">三维视图</div>
<div class="tr" style="left:55.5px;top:442.4px;letter-spacing:0">{3D}</div>
<div class="tr" style="left:55.5px;top:457.8px;font-weight:bold">{三维}</div>
<div class="tr" style="left:39.5px;top:474px">立面 (建筑立面)</div>
<div class="tr" style="left:55.5px;top:490px">东</div>
<div class="tr" style="left:55.5px;top:505.6px">北</div>
<div class="tr" style="left:55.5px;top:521.4px">南</div>
<div class="tr" style="left:55.5px;top:537px">西</div>
<!--LEFT-END-->
<!--VIEWPORT-->
<svg id="scene" class="abs" style="left:0;top:0" width="1000" height="577" viewBox="0 0 1000 577">
<defs>
  <clipPath id="cpL"><polygon points="302,321.5 583,201 622.5,352.5"/></clipPath>
  <clipPath id="cpR"><polygon points="622.5,352.5 583,201 863,310.5"/></clipPath>
  <pattern id="pane" width="4.2" height="5" patternUnits="userSpaceOnUse"><rect x="0.8" y="0.9" width="2.7" height="3.4" fill="#b4c6ea"/></pattern>
  <pattern id="paneD" width="4.4" height="5.6" patternUnits="userSpaceOnUse"><rect width="4.4" height="5.6" fill="#0c0c0c"/><rect x="1.1" y="1.2" width="2.5" height="3.4" fill="#3b3b3b"/></pattern>
  <pattern id="paneG" width="4.4" height="5.6" patternUnits="userSpaceOnUse"><rect width="4.4" height="5.6" fill="#0c0c0c"/><rect x="1.1" y="1.2" width="2.6" height="3.5" fill="#8a8a8a"/></pattern>
  <pattern id="paneK" width="4.2" height="5.6" patternUnits="userSpaceOnUse"><rect width="4.2" height="5.6" fill="#0c0c0c"/><rect x="1.1" y="1.2" width="2.3" height="3.4" fill="#2e2e2e"/></pattern>
  <pattern id="paneW" width="4.2" height="5.6" patternUnits="userSpaceOnUse"><rect width="4.2" height="5.6" fill="#0c0c0c"/><rect x="1.1" y="1.2" width="2.3" height="3.4" fill="#9a9a9a"/></pattern>
</defs>
<!-- red annotation rectangle -->
<rect x="258.2" y="179.4" width="646.1" height="289" fill="none" stroke="#e10f16" stroke-width="3.3"/>
<!-- walls -->
<polygon points="300.5,322.2 622.5,352.6 622.5,404 300.5,374" fill="#333333"/>
<polygon points="622.5,352.5 863.5,311.5 865.5,313.5 865.5,362.5 622.5,404" fill="#8a8a8a"/>
<polyline points="300.5,374 622.5,404 865.5,362.5" fill="none" stroke="#111" stroke-width="0.9"/>
<line x1="622.5" y1="353" x2="622.5" y2="404" stroke="#1a1a1a" stroke-width="1"/>
<line x1="865.3" y1="313.5" x2="865.3" y2="362.5" stroke="#151515" stroke-width="1.3"/>
<!-- roof faces -->
<polygon points="302,321.5 583,201 622.5,352.5" fill="#435a8b"/>
<polygon points="622.5,352.5 583,201 863,310.5" fill="#4e6ca8"/>
<!-- interior seen through LEFT face -->
<g clip-path="url(#cpL)">
  <polygon points="302,321.5 543,280.5 640,290 640,296 542.5,285 322,321" fill="#485f95"/>
  <polygon points="322,320.8 542.5,284.8 542.5,325.5 515,327.6 442.2,321.4 362.4,313.9 362.4,328 322,324" fill="#5a75ab"/>
  <polygon points="542.5,284.8 700,299 515,327.6 542.5,325" fill="#3f5992"/>
  <polygon points="515,327.4 541.6,323.4 700,299 703,338.5 622.5,352.5 515,343" fill="#5874ab"/>
  <polygon points="362.4,313.9 442.2,321.6 399,330.6 362.4,327.6" fill="#405994"/>
  <polygon points="442.2,321.6 442.2,336 399,331.2" fill="#5c77ae"/>
  <polygon points="442.2,321.4 603.6,337 603.6,351 442.2,335.6" fill="#405994"/>
  <polygon points="561.6,346.4 603.6,337.6 603.6,350.4" fill="#5a76ad"/>
  <polygon points="603.6,337.2 622,339 622.5,352.5 603.6,350.6" fill="#3c558d"/>
  <line x1="542.5" y1="284.8" x2="542.5" y2="325" stroke="#4a63a0" stroke-width="0.7"/>
  <line x1="442.2" y1="321.4" x2="442.2" y2="335.6" stroke="#4a63a0" stroke-width="0.6"/>
  <line x1="322" y1="320.8" x2="542.5" y2="284.8" stroke="#42599a" stroke-width="0.7"/>
  <!-- interior windows -->
  <g transform="translate(441,306.5) skewY(-9.6)"><rect width="25" height="16.5" fill="#42598f"/><rect width="25" height="16.5" fill="url(#pane)"/><rect x="11.6" width="1.8" height="16.5" fill="#42598f"/></g>
  <g transform="translate(500,298.5) skewY(-9.6)"><rect width="25" height="28" fill="#42598f"/><rect width="25" height="28" fill="url(#pane)"/><rect x="11.6" width="1.8" height="28" fill="#42598f"/></g>
  <g transform="translate(565.5,293.5) skewY(5.2)"><rect width="31" height="24" fill="#3a528a"/><rect width="31" height="24" fill="url(#pane)" opacity="0.85"/><rect x="14.6" width="2" height="24" fill="#3a528a"/></g>
</g>
<!-- interior seen through RIGHT face -->
<g clip-path="url(#cpR)">
  <polygon points="543,280.5 863,310.5 845,313 542.5,285" fill="#5070b2"/>
  <polygon points="542.5,284.8 700,299 541.6,325.5" fill="#5176c4"/>
  <polygon points="541.6,325.5 703,299.3 703,338.5 622.5,352.5 526,344" fill="#6b8fdb"/>
  <polygon points="603,336.4 660,341.8 622.5,352.5" fill="#5f84d2"/>
  <polygon points="703,299.3 845,312.8 863,310.5 703,338.5" fill="#5176c4"/>
  <line x1="703" y1="299.3" x2="703" y2="338.4" stroke="#4f70c4" stroke-width="0.8"/>
  <line x1="542.5" y1="285" x2="845" y2="313" stroke="#4a68b8" stroke-width="0.7" stroke-dasharray="4 2"/>
  <g transform="translate(638,301.6) skewY(5.2)"><rect width="23" height="6.5" fill="url(#pane)"/></g>
  <g transform="translate(722.5,308.2) skewY(5.2)"><rect width="31" height="26" fill="#4568b4"/><rect width="31" height="26" fill="url(#pane)"/><rect x="14.4" width="2.2" height="26" fill="#4568b4"/></g>
</g>
<!-- ridge + eave lines -->
<line x1="583" y1="201" x2="543" y2="281" stroke="#3a5db8" stroke-width="0.8"/>
<line x1="302" y1="321.5" x2="543" y2="280.5" stroke="#3f5ca8" stroke-width="0.7"/>
<line x1="543" y1="280.5" x2="863" y2="310.5" stroke="#3f5fb4" stroke-width="0.7" stroke-dasharray="5 2"/>
<line x1="583" y1="201" x2="622.5" y2="352.5" stroke="#2458d0" stroke-width="1.3"/>
<polyline points="302,321.5 583,201 863,310.5" fill="none" stroke="#4d7ce6" stroke-width="1.8" stroke-linejoin="round"/>
<polyline points="301.5,321.8 622.5,352.8 863.5,311.3" fill="none" stroke="#2d5ed2" stroke-width="2.7" stroke-linejoin="round"/>
<line x1="300.5" y1="323.8" x2="622.5" y2="354.8" stroke="#0d0d0d" stroke-width="1" stroke-dasharray="6 1.5"/><line x1="300.9" y1="323" x2="300.9" y2="374" stroke="#111" stroke-width="0.9"/><line x1="622.5" y1="354.4" x2="865.5" y2="314" stroke="#161616" stroke-width="0.9"/>
<!-- front-left wall windows -->
<g transform="translate(444.5,341.5) skewY(5.3)">
  <rect x="1.5" y="1" width="33" height="38" fill="url(#paneD)"/>
  <rect x="1" y="0" width="34" height="40" fill="none" stroke="#0a0a0a" stroke-width="2"/>
  <rect x="-0.5" y="-0.5" width="37" height="3" fill="#0a0a0a"/><rect x="-0.5" y="37.5" width="37" height="3" fill="#0a0a0a"/>
  <rect x="16.5" y="1" width="2.6" height="38" fill="#0a0a0a"/>
  <g fill="#fff"><rect x="4" y="31.5" width="2.4" height="2.4"/><rect x="8" y="31.5" width="2" height="2"/><rect x="12" y="32" width="2.4" height="2.4"/><rect x="15.5" y="32.5" width="1.6" height="1.6"/><rect x="20.5" y="32.5" width="2.4" height="2.4"/><rect x="24.5" y="33" width="2" height="2"/><rect x="28" y="33" width="2.4" height="2.4"/><rect x="31.5" y="33.3" width="2" height="2"/></g>
</g>
<g transform="translate(568.5,353) skewY(5.3)">
  <rect x="1.5" y="1" width="33" height="38" fill="url(#paneG)"/>
  <rect x="1" y="0" width="34" height="40" fill="none" stroke="#0a0a0a" stroke-width="2"/>
  <rect x="-0.5" y="-0.5" width="37" height="3" fill="#0a0a0a"/><rect x="-0.5" y="37.5" width="37" height="3" fill="#0a0a0a"/>
  <rect x="16.5" y="1" width="2.6" height="38" fill="#0a0a0a"/>
  <rect x="6" y="9" width="9" height="1.8" fill="#0a0a0a"/><rect x="21" y="14" width="9" height="1.8" fill="#0a0a0a"/>
  <rect x="30.5" y="31.5" width="2.2" height="2.2" fill="#fff"/>
</g>
<!-- front-right wall windows -->
<g transform="translate(641.5,355.2) skewY(-8.2)">
  <rect x="1" y="1" width="26" height="35" fill="url(#paneK)"/>
  <rect x="1" y="0" width="26.5" height="37" fill="none" stroke="#0a0a0a" stroke-width="1.8"/>
  <rect x="-0.5" y="-0.8" width="29.5" height="2.8" fill="#0a0a0a"/><rect x="-0.5" y="35" width="29.5" height="2.8" fill="#0a0a0a"/>
  <rect x="13" y="1" width="2.2" height="35" fill="#0a0a0a"/>
  <rect x="4.5" y="7.5" width="6.5" height="3" fill="#7d8a8f"/><rect x="17.5" y="7" width="6.5" height="3" fill="#7d8a8f"/>
</g>
<g transform="translate(699.5,345.5) skewY(-8.2)">
  <rect x="1" y="1" width="26" height="35" fill="url(#paneW)"/>
  <rect x="1" y="0" width="26.5" height="37" fill="none" stroke="#0a0a0a" stroke-width="1.8"/>
  <rect x="-0.5" y="-0.8" width="29.5" height="2.8" fill="#0a0a0a"/><rect x="-0.5" y="35" width="29.5" height="2.8" fill="#0a0a0a"/>
  <rect x="13" y="1" width="2.2" height="35" fill="#0a0a0a"/>
  <rect x="3.5" y="5.5" width="5.5" height="5" fill="#fff"/><rect x="16.5" y="6" width="6" height="3.4" fill="#f2f2f2"/><rect x="9" y="26" width="3" height="3" fill="#e8e8e8"/>
</g>
<!-- door -->
<g transform="translate(768.5,344.6) skewY(-9.5)">
  <rect x="0" y="0" width="12.5" height="35" fill="#858585"/>
  <path d="M0,35 V0 H12.5" fill="none" stroke="#1a1a1a" stroke-width="0.9"/>
  <line x1="6" y1="0" x2="6" y2="35" stroke="#2a2a2a" stroke-width="0.7"/>
  <line x1="12" y1="0" x2="12" y2="35.5" stroke="#0a0a0a" stroke-width="1.8"/>
</g>
</svg>

<svg id="vpx" class="abs" style="left:0;top:0" width="1000" height="577" viewBox="0 0 1000 577">
<!-- view window controls -->
<rect x="943" y="146.4" width="9.4" height="3" rx="1.2" fill="#fff" stroke="#555" stroke-width="0.9"/>
<rect x="960" y="142.4" width="6" height="6" rx="1" fill="#fff" stroke="#555" stroke-width="0.9"/><rect x="957.6" y="144.4" width="6" height="6.4" rx="1" fill="#fff" stroke="#444" stroke-width="0.9"/><rect x="959.6" y="146.6" width="2" height="2.2" fill="#666"/>
<path d="M972.2,143 L979.8,150.4 M979.8,143 L972.2,150.4" stroke="#555" stroke-width="3" stroke-linecap="round"/><path d="M972.2,143 L979.8,150.4 M979.8,143 L972.2,150.4" stroke="#fff" stroke-width="1.3" stroke-linecap="round"/>
<!-- v scrollbar arrows/thumb -->
<path d="M986.6,145.6 L990.4,141.6 L994.2,145.6" fill="none" stroke="#333" stroke-width="1.3"/>
<path d="M986.6,532.4 L990.4,536.4 L994.2,532.4" fill="none" stroke="#333" stroke-width="1.3"/>
<rect x="985.2" y="331.6" width="10.6" height="13.6" fill="#c6c6c6"/>
<!-- h scrollbar -->
<rect x="722.5" y="543.6" width="13.6" height="11.4" fill="#c6c6c6"/>
<path d="M974.6,545.4 L978.4,549.2 L974.6,553" fill="none" stroke="#333" stroke-width="1.3"/>
<path d="M483.6,545.4 L479.8,549.2 L483.6,553" fill="none" stroke="#333" stroke-width="1.3"/>
<g fill="#b5b5b5"><rect x="992" y="551" width="1.4" height="1.4"/><rect x="989.4" y="553.4" width="1.4" height="1.4"/><rect x="992" y="553.4" width="1.4" height="1.4"/><rect x="992" y="548.6" width="1.4" height="1.4"/><rect x="986.8" y="553.4" width="1.4" height="1.4"/><rect x="989.4" y="551" width="1.4" height="1.4"/></g>
<!-- ViewCube -->
<ellipse cx="931.5" cy="227.4" rx="38.5" ry="7.2" fill="#fafafa" stroke="#cfcfcf" stroke-width="1.1" stroke-dasharray="1.4 1.4"/>
<ellipse cx="931.5" cy="227.4" rx="30" ry="4.6" fill="#fff" stroke="#e2e2e2" stroke-width="0.8"/>
<path d="M912,196.3 L927.6,194.2 L951.2,195.3 L935,197.5 Z" fill="#efefef" stroke="#bdbdbd" stroke-width="0.7"/>
<path d="M912,196.3 L935,197.5 V226.6 L912,220.4 Z" fill="#dcdcdc" stroke="#b8b8b8" stroke-width="0.7"/>
<path d="M935,197.5 L951.2,195.3 V219.3 L935,226.6 Z" fill="#e6e6e6" stroke="#b8b8b8" stroke-width="0.7"/>
<g fill="none" stroke="#a9a9a9" stroke-width="1"><path d="M916.4,205.6 L926.4,206.4 M921.6,202.6 Q920.6,209.6 915.8,214.4 M920,210 L927,210.8 M923.6,210.6 V216.4 M920.4,216.2 L927.6,217"/><path d="M939,205 L948.6,203.6 M941.2,202 L942.2,204.4 M946.6,201 L945.6,203.8 M940.4,207.6 V216 M940.4,207.6 L943.4,207.2 V215 M940.4,210.4 H943.4 M945.8,206.8 V212.6 M948.2,206.2 V215.4 L946.8,214.4"/></g>
<!-- nav bar -->
<rect x="955.6" y="255.8" width="26.6" height="91.6" rx="4" fill="#f5f5f5" stroke="#b4b4b4" stroke-width="1.3"/>
<circle cx="977" cy="260.8" r="2.6" fill="#e4e4e4" stroke="#a8a8a8" stroke-width="0.9"/><path d="M975.8,259.6 l2.4,2.4 m0,-2.4 l-2.4,2.4" stroke="#999" stroke-width="0.6"/>
<circle cx="976.8" cy="342.2" r="2.6" fill="#e4e4e4" stroke="#a8a8a8" stroke-width="0.9"/>
<path d="M968.6,272 H976.6 V280.2 A8,8 0 1 1 968.6,272 Z" fill="#ededed" stroke="#8c8c8c" stroke-width="1"/><circle cx="968.6" cy="280.2" r="5.6" fill="#f8f8f8" stroke="#8c8c8c" stroke-width="0.9"/><circle cx="968.6" cy="279.4" r="3.2" fill="#fff" stroke="#9a9a9a" stroke-width="0.8"/><path d="M964.6,284 Q968.6,281 972.6,284" fill="none" stroke="#9a9a9a" stroke-width="0.8"/>
<path d="M966.6,295.4 h4 l-2,2.4 z" fill="#444"/>
<line x1="958.4" y1="301.6" x2="979.6" y2="301.6" stroke="#c4c4c4" stroke-width="1"/>
<rect x="963" y="308.4" width="8.4" height="8.6" fill="#a9d18e" stroke="#8fbf72" stroke-width="0.8"/><circle cx="972" cy="317.2" r="2.4" fill="#fff" stroke="#666" stroke-width="0.9"/><line x1="973.6" y1="319" x2="975.6" y2="321.2" stroke="#666" stroke-width="1.1"/>
<path d="M966.6,328.8 h4 l-2,2.4 z" fill="#444"/>
<!-- watermark -->
<g fill="#fff" stroke="#c2c2c2" stroke-width="1" font-family="Liberation Sans, sans-serif" font-weight="bold" paint-order="stroke" style="paint-order:stroke">
<text x="768" y="527" font-size="41" textLength="58" lengthAdjust="spacingAndGlyphs">Bai</text>
<path d="M855,495 Q867,495 877,510.5 Q884,522 875,526.6 Q866,528.4 855,525.4 Q844,528.4 835,526.6 Q826,522 833,510.5 Q843,495 855,495 Z"/>
<ellipse cx="835" cy="494.5" rx="5.2" ry="7.4" transform="rotate(-18 835 494.5)"/><ellipse cx="848" cy="480.5" rx="5.6" ry="7.8" transform="rotate(-6 848 480.5)"/><ellipse cx="864" cy="480.5" rx="5.6" ry="7.8" transform="rotate(8 864 480.5)"/><ellipse cx="877" cy="494.5" rx="5.2" ry="7.4" transform="rotate(20 877 494.5)"/>
<text x="840" y="521" font-size="22" textLength="29" lengthAdjust="spacingAndGlyphs" stroke-width="0.7">du</text>
<text x="883" y="523" font-size="30" textLength="61" lengthAdjust="spacingAndGlyphs">经验</text>
<text x="769" y="548.8" font-size="20" font-weight="normal" textLength="176" lengthAdjust="spacingAndGlyphs" stroke="#c2c2c2">jingyan.baidu.com</text>
</g>
</svg>
<!-- view control bar -->
<div class="t" style="left:197.5px;top:543px;font-size:9.6px;color:#222;letter-spacing:0;word-spacing:1.6px">1 : 100</div>
<svg class="abs" style="left:0;top:540px" width="500" height="18" viewBox="0 540 500 18">
<rect x="245" y="544.6" width="10" height="7.4" fill="#fff" stroke="#333" stroke-width="1"/><rect x="247" y="546.4" width="2.6" height="1.8" fill="#333"/><rect x="250.6" y="548.6" width="2.6" height="1.8" fill="#333"/>
<path d="M261.4,547.4 L263.6,545 H271.6 V550.2 L269.4,552.6 H261.4 Z" fill="#cfe6f6" stroke="#2f7bb8" stroke-width="1" stroke-linejoin="round"/><path d="M261.4,547.4 H269.4 V552.6 M269.4,547.4 L271.6,545" fill="none" stroke="#2f7bb8" stroke-width="0.8"/>
<circle cx="280.6" cy="547.6" r="2.6" fill="#ffd257" stroke="#d9891a" stroke-width="0.8"/><path d="M280.6,543.4 v1 M280.6,550.8 v1 M276.4,547.6 h1 M283.8,547.6 h1 M277.6,544.6 l0.7,0.7 M283.6,544.6 l-0.7,0.7 M277.6,550.6 l0.7,-0.7" stroke="#d9891a" stroke-width="0.8"/><path d="M282.6,549.4 l3.6,3.4 m0,-3.4 l-3.6,3.4" stroke="#d81e1e" stroke-width="1.3"/>
<circle cx="297" cy="548" r="2.8" fill="#fff" stroke="#2f6fb0" stroke-width="1"/><path d="M294,552.6 h5" stroke="#555" stroke-width="1"/><path d="M299.6,549.6 l3.6,3.4 m0,-3.4 l-3.6,3.4" stroke="#d81e1e" stroke-width="1.3"/>
<path d="M311,546 l3,-1.6 h5 l-1.4,2.6 h-4.6 z M311,546 l2.4,3.6" fill="#fff" stroke="#444" stroke-width="0.9"/><circle cx="319.4" cy="549.6" r="2.2" fill="#d6ecfa" stroke="#2f7bb8" stroke-width="0.8"/><path d="M319.4,551.8 v1.4" stroke="#2f7bb8" stroke-width="0.9"/>
<path d="M327,546.4 h8 v5 h-8 z" fill="#fff" stroke="#444" stroke-width="0.9" stroke-dasharray="1.6 1"/><path d="M330,546.8 l4.4,4.4 m0,-4.4 l-4.4,4.4" stroke="#d81e1e" stroke-width="1.4"/><path d="M326.6,552.8 h3" stroke="#2f7bb8" stroke-width="1.1"/>
<path d="M344,546.4 h8 v5 h-8 z" fill="#fff" stroke="#444" stroke-width="0.9" stroke-dasharray="1.6 1"/><circle cx="351.6" cy="548" r="2.2" fill="#d6ecfa" stroke="#2f7bb8" stroke-width="0.8"/><path d="M343.6,552.8 h3 M346,545 v1.4" stroke="#2f7bb8" stroke-width="1.1"/>
<path d="M361,548 L366,544 L371,548 V552.6 H361 Z" fill="#fff" stroke="#333" stroke-width="1" stroke-linejoin="round"/><rect x="365" y="548.6" width="3.6" height="3.6" fill="#fff" stroke="#2f7bb8" stroke-width="0.8"/><rect x="368" y="549.6" width="3.6" height="3.2" fill="#f2f2f2" stroke="#555" stroke-width="0.7"/>
<path d="M377.6,546 q2,-2 4,0.6 q1.6,2.2 3.6,0.4 M377.6,549.6 q2,3 4,0 q1.6,-2.2 3.6,0" fill="none" stroke="#333" stroke-width="0.9"/><circle cx="386.4" cy="548.4" r="1.9" fill="#fff" stroke="#444" stroke-width="0.8"/>
<circle cx="399" cy="547" r="2" fill="#d6ecfa" stroke="#2f7bb8" stroke-width="0.9"/><path d="M399,549 v2.6" stroke="#2f7bb8" stroke-width="1"/>
<path d="M410,546 h8 v5.4 h-8 z" fill="#fff" stroke="#333" stroke-width="1" stroke-dasharray="2 1"/><circle cx="417.4" cy="550" r="1.9" fill="#fff" stroke="#555" stroke-width="0.8"/><path d="M412,548.6 h3.6" stroke="#555" stroke-width="0.8"/>
<path d="M426,548 q0,-3.6 5,-3.6 q5,0 5,3.6 v4 h-10 z" fill="#fff" stroke="#444" stroke-width="0.9"/><path d="M427.4,548.6 h2.6 v2.6 h-2.6 z M431.6,548.6 h2.6 v2.6 h-2.6 z" fill="#d9534f"/><circle cx="436.4" cy="549.6" r="2" fill="#d6ecfa" stroke="#2f7bb8" stroke-width="0.8"/>
<path d="M443,547.4 l2,-2 h6.6 v5.4 l-2,2 h-6.6 z" fill="#f4f4f4" stroke="#333" stroke-width="0.9" stroke-linejoin="round"/><path d="M443,547.4 h6.6 v5.4 M449.6,547.4 l2,-2 M445,549 h3 M445,551 h3" fill="none" stroke="#333" stroke-width="0.7"/>
<path d="M460,544.4 v3.4 M471.4,544.4 v3.4 M460,546 h11.4" fill="none" stroke="#333" stroke-width="1"/><path d="M460,550.6 h6" stroke="#666" stroke-width="0.7" stroke-dasharray="1.4 1"/><path d="M466.4,553 v-2.6 q0,-2 2.4,-2 q2.4,0 2.4,2 v2.6 z" fill="#8c8c8c" stroke="#444" stroke-width="0.7"/>
</svg>
<!--VIEWPORT-END-->
<!--STATUS-->
<div class="t" style="left:3px;top:561.4px;font-size:9.6px;color:#111;letter-spacing:-0.24px">单击可进行选择; 按 Tab 键并单击可选择其他项目; 按 Ctrl 键并单击可将新项目添加到选择!</div>
<div class="abs" style="left:412px;top:559.6px;width:161px;height:15.4px;background:#fff;border:1px solid #c2c2c2;box-sizing:border-box;"></div>
<div class="abs" style="left:660px;top:562px;width:163px;height:13.4px;background:#fff;border:1px solid #c2c2c2;box-sizing:border-box;"></div>
<div class="t" style="left:664px;top:562.6px;color:#444">主模型</div>
<div class="t" style="left:595px;top:562px;font-size:9.6px;color:#222">:0</div>
<svg class="abs" style="left:380px;top:557px" width="620" height="20" viewBox="380 557 620 20">
<g fill="#b4b4b4" stroke="#9a9a9a" stroke-width="0.6"><circle cx="396.6" cy="563.4" r="2"/><path d="M393.6,572 q0,-5 3,-5 q3,0 3,5 z"/><circle cx="401.6" cy="565" r="2"/><path d="M398.8,573.4 q0,-5 2.8,-5 q3,0 3,5 z"/></g>
<path d="M561.6,565.4 L565,568.8 L568.4,565.4" fill="none" stroke="#9a9a9a" stroke-width="1"/>
<path d="M581.6,564 h8 l-3,3.6 v4.6 l-2,-1.2 v-3.4 z" fill="#e9e9e9" stroke="#8c8c8c" stroke-width="0.9" stroke-linejoin="round"/><path d="M587,571.6 l4,-5" stroke="#8c8c8c" stroke-width="1.2"/>
<rect x="622" y="562.6" width="12.4" height="10.4" rx="1.4" fill="#f2f2f2" stroke="#333" stroke-width="1.2"/><path d="M627.4,565.6 h5 M627.4,568 h5 M627.4,570.4 h5" stroke="#333" stroke-width="0.9"/><rect x="623.8" y="564.8" width="2.4" height="2.4" fill="#2f6fb0"/>
<rect x="642.6" y="563" width="8.4" height="8.6" fill="#a9a9a9"/><path d="M645,565 l4,3 l-2,0.4 l1,2 l-1,0.4 l-1,-2 l-1.4,1.2 z" fill="#e4e4e4"/>
<path d="M814,566.6 L817.4,570 L820.8,566.6" fill="none" stroke="#8c8c8c" stroke-width="1"/>
<path d="M967,566 q0,-3.4 3,-3.4 q2,0 3,1.2 q1,-1.2 3,-1.2 q3,0 3,3.4 q0,2 -3,2.4 l-3,0.6 l-3,-0.6 q-3,-0.4 -3,-2.4 z" fill="#f3c53c" stroke="#a8801c" stroke-width="0.8"/><path d="M973.6,565.6 v8 l2,-1.8 l1.4,3 l1.4,-0.6 l-1.4,-3 l2.6,-0.2 z" fill="#fff" stroke="#222" stroke-width="0.8" stroke-linejoin="round"/>
<g fill="#b0b0b0"><rect x="992" y="571" width="1.4" height="1.4"/><rect x="989.4" y="573.4" width="1.4" height="1.4"/><rect x="992" y="573.4" width="1.4" height="1.4"/><rect x="992" y="568.6" width="1.4" height="1.4"/><rect x="986.8" y="573.4" width="1.4" height="1.4"/><rect x="989.4" y="571" width="1.4" height="1.4"/></g>
</svg>

</div>
</body>
</html>
